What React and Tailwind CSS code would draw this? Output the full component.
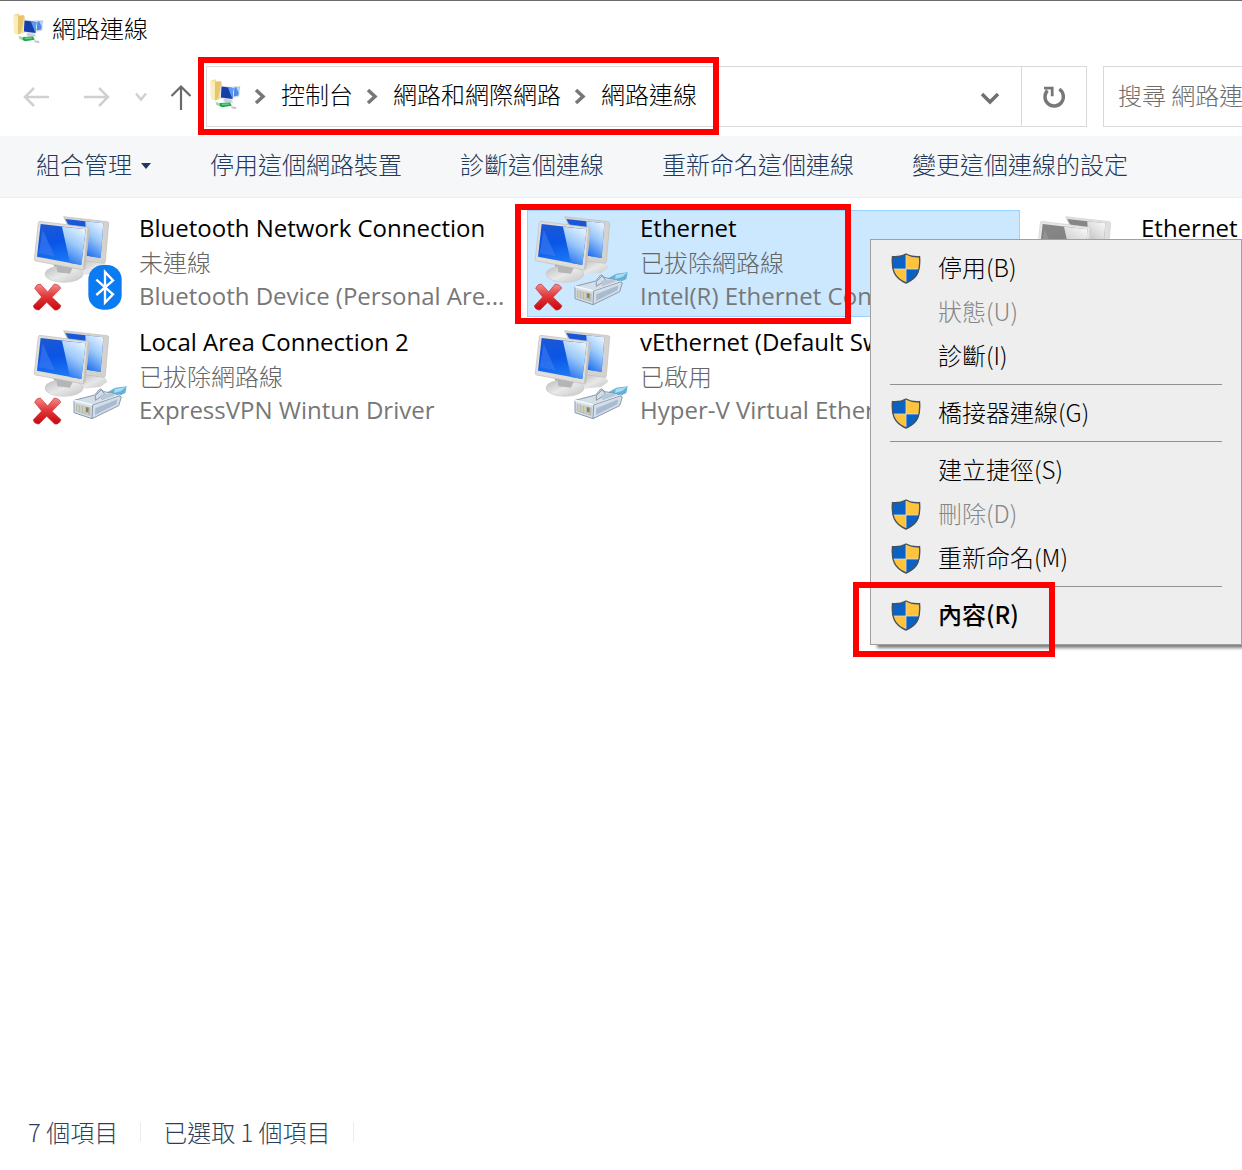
import { useState } from 'react';

const COMMANDS = ['停用這個網路裝置', '診斷這個連線', '重新命名這個連線', '變更這個連線的設定'];

const CRUMBS = ['控制台', '網路和網際網路', '網路連線'];

const CONNECTIONS = [
  { id: 1, name: 'Bluetooth Network Connection', status: '未連線', device: 'Bluetooth Device (Personal Are...', badge: 'bluetooth', off: true },
  { id: 2, name: 'Ethernet', status: '已拔除網路線', device: 'Intel(R) Ethernet Conn', badge: 'cable', off: true },
  { id: 3, name: 'Ethernet', status: '', device: '', disabled: true },
  { id: 4, name: 'Local Area Connection 2', status: '已拔除網路線', device: 'ExpressVPN Wintun Driver', badge: 'cable', off: true },
  { id: 5, name: 'vEthernet (Default Switch)', status: '已啟用', device: 'Hyper-V Virtual Ethernet', badge: 'cable' },
];

const MENU = [
  [
    { label: '停用(B)', shield: true },
    { label: '狀態(U)', disabled: true },
    { label: '診斷(I)' },
  ],
  [{ label: '橋接器連線(G)', shield: true }],
  [
    { label: '建立捷徑(S)' },
    { label: '刪除(D)', shield: true, disabled: true },
    { label: '重新命名(M)', shield: true },
  ],
  [{ label: '內容(R)', shield: true, bold: true, marked: true }],
];

function NetworkFolderIcon() {
  return (
    <svg viewBox="38 38 94 94" className="h-[31px] w-[31px] shrink-0" aria-hidden="true">
      <path d="M40 43l14-4 4 5 14 1 3 8-4 44-17 6-13-4z" fill="#f3dc94" />
      <path d="M40 43l13 5v55l-12-5z" fill="#fbeebd" />
      <path d="M53 48l18-3v16l-10 38-8 4z" fill="#e6c56d" />
      <path d="M102 61l28-2-3 33-24 4z" fill="#d5deec" />
      <path d="M105 64l22-2-3 26-19 4z" fill="#4f8be6" />
      <path d="M117 63l10-1-2 18z" fill="#b4d4fa" />
      <path d="M70 58l42 4-3 40-41-5z" fill="#e3e9f2" />
      <path d="M73 61l36 4-3 34-35-5z" fill="#173fa9" />
      <path d="M92 63l17 2-3 34z" fill="#5e9bf0" />
      <path d="M82 98l20 3 7 8-22 1-9-5z" fill="#ccd1d8" />
      <path d="M55 108l20 5-1 9-17-5z" fill="#9adbb1" />
      <path d="M68 111l31-2 5 10-29 5-8-4z" fill="#25a653" />
      <path d="M73 113l22-1 2 3-21 2z" fill="#79d99a" />
      <path d="M101 121l16 2 1 7-14-3z" fill="#bfc4c8" />
    </svg>
  );
}

function Shield() {
  return (
    <svg viewBox="0 0 30 31" className="h-[31px] w-[30px]" aria-hidden="true">
      <path d="M15 1c4 2.300 8.500 3 13.500 2.600C29.600 16 27.500 25 15 30 2.500 25 .4 16 1.500 3.600 6.500 4 11 3.300 15 1z" fill="#ffc33c" />
      <path d="M15 1v15H1.800C1.200 12 1.200 8 1.500 3.600 6.500 4 11 3.300 15 1z" fill="#0a62c4" />
      <path d="M15 16h13.200C27 23 23.500 27 15 30z" fill="#0a62c4" />
      <path d="M15 1v29M2 16h26" stroke="#d9dcd8" strokeWidth="0.8" />
      <path d="M15 1c4 2.300 8.500 3 13.500 2.600C29.600 16 27.500 25 15 30 2.500 25 .4 16 1.500 3.600 6.500 4 11 3.300 15 1z" fill="none" stroke="#45525e" strokeWidth="1.400" />
    </svg>
  );
}

function ConnectionIcon({ badge, off, disabled }) {
  return (
    <svg viewBox="30 30 300 306" className={`h-[102px] w-[100px] ${disabled ? 'opacity-70 grayscale' : ''}`} aria-hidden="true">
      <defs>
        <linearGradient id="screen" x1="0" y1="0" x2="0.200" y2="1">
          <stop offset="0" stopColor="#1f57d2" />
          <stop offset="0.500" stopColor="#0a55e6" />
          <stop offset="1" stopColor="#1c78f5" />
        </linearGradient>
        <linearGradient id="shine" x1="0.700" y1="0" x2="0.300" y2="1">
          <stop offset="0" stopColor="#e4f2ff" />
          <stop offset="0.450" stopColor="#9cc9fa" />
          <stop offset="1" stopColor="#2170ee" />
        </linearGradient>
        <linearGradient id="stand" x1="0" y1="0" x2="1" y2="1">
          <stop offset="0" stopColor="#b9bbbd" />
          <stop offset="0.500" stopColor="#e8e8e8" />
          <stop offset="1" stopColor="#c3c4c5" />
        </linearGradient>
        <linearGradient id="cross" x1="0" y1="0" x2="0" y2="1">
          <stop offset="0" stopColor="#f58a8a" />
          <stop offset="0.450" stopColor="#e23a3c" />
          <stop offset="1" stopColor="#c8060c" />
        </linearGradient>
      </defs>

      {/* rear monitor */}
      <path d="M196 178l58 8 8 14-22 16-60 6z" fill="url(#stand)" />
      <path d="M131 47l131 15q5 1 4 6l-10 114q-1 5-6 5l-62-9z" fill="#d3d2ce" stroke="#bdbcb9" strokeWidth="2" />
      <path d="M136 54l114 13-8 104-50-8z" fill="url(#screen)" />
      <path d="M196 61l54 6-8 104-42-7z" fill="url(#shine)" />

      {/* front monitor */}
      <path d="M100 190l60 12-2 22-44-4z" fill="#a9aaac" />
      <ellipse cx="132" cy="219" rx="57" ry="25" fill="url(#stand)" stroke="#c9c9c9" strokeWidth="2" />
      <path d="M108 186l52 10-10 22-38-4z" fill="#b4b5b7" />
      <path d="M60 61l142 18q6 1 5 7l-13 114q-1 7-8 6L47 180q-5-1-4-7L55 65q1-4 5-4z" fill="#dfded9" stroke="#bfbeba" strokeWidth="2" />
      <path d="M203 81l6 4-13 117-7 4z" fill="#c2c1be" />
      <path d="M62 69l135 16-13 107-133-25z" fill="url(#screen)" />
      <path d="M126 77l71 8-13 107-34-6z" fill="url(#shine)" />
      <path d="M68 86l36 80-48-9z" fill="#3e7cf0" opacity="0.600" />

      {badge === 'bluetooth' && (
        <g>
          <rect x="205" y="192" width="100" height="134" rx="44" fill="#0a7bf2" />
          <path d="M229 236l50 44-24 25v-92l24 25-50 44" fill="none" stroke="#fff" strokeWidth="7" strokeLinejoin="miter" />
        </g>
      )}

      {badge === 'cable' && (
        <g strokeLinejoin="round">
          <path d="M262 232l24-14 34-4-4 20-30 14-20 8z" fill="#62b1d6" />
          <path d="M284 222l34-7-14 13-22 6z" fill="#a9dcef" />
          <path d="M162 256l62-16 16-19 12 9 34 6 18 10-8 26-80 39-54-18z" fill="#d3dee9" stroke="#8b99aa" strokeWidth="3" />
          <path d="M162 256l56 14 82-29" fill="none" stroke="#f4f8fb" strokeWidth="5" />
          <path d="M218 270l-2 41M218 270l82-28M226 242l18-18 10 14-28 18z" fill="none" stroke="#8b99aa" strokeWidth="3" />
          <path d="M226 280l66-27-3 15-64 32z" fill="#a9bbd0" />
          <path d="M240 240l34-6 12 7-42 15z" fill="#b7c7d9" />
          <path d="M168 266l44 12-1 25-44-14z" fill="#b4bdbd" />
          <path d="M174 268v21M183 270v22M192 273v22M201 275v23" stroke="#e6dfab" strokeWidth="3" />
          <path d="M198 276l8 2-1 15-7-3z" fill="#8e8250" />
        </g>
      )}

      {off && (
        <path d="M44 262q6-14 17-13l22 24 20-24q16 2 19 13l-26 27 27 25q-6 15-19 13l-24-23-23 23q-15 0-17-13l25-26z" fill="url(#cross)" stroke="#c53036" strokeWidth="2" strokeLinejoin="round" />
      )}
    </svg>
  );
}

function CrumbArrow() {
  return (
    <svg viewBox="0 0 40 20" className="mt-1 h-5 w-10 shrink-0" fill="none" stroke="#777" strokeWidth="3.500" aria-hidden="true">
      <path d="M15 4l7 6.500-7 6.500" />
    </svg>
  );
}

function ContextMenu() {
  return (
    <div role="menu" className="absolute top-[29px] left-[343px] z-10 w-[372px] border border-[#a0a0a0] bg-[#eeeeee] pt-[6px] pb-[7px] shadow-[5px_5px_3px_-2px_rgba(0,0,0,0.5)]">
      {MENU.map((group, i) => (
        <div key={i} role="group">
          {i > 0 && <hr className="mx-[19px] my-[6px] border-[#919191]" />}
          {group.map((item) => (
            <div key={item.label} className="relative">
              <button
                type="button"
                role="menuitem"
                disabled={item.disabled}
                className={`flex h-11 w-full items-center gap-[17px] pl-5 text-left ${
                  item.disabled ? 'text-[#868686]' : 'text-black hover:bg-white'
                } ${item.bold ? 'font-medium' : ''}`}
              >
                <span className="w-[30px] shrink-0">{item.shield && <Shield />}</span>
                <span className="pb-[2px]">{item.label}</span>
              </button>
              {item.marked && (
                <div className="pointer-events-none absolute -top-[11px] -left-[18px] h-[75px] w-[202px] border-6 border-[#ff0000]" />
              )}
            </div>
          ))}
        </div>
      ))}
    </div>
  );
}

function ConnectionTile({ item, selected, onSelect }) {
  return (
    <div className="relative h-[107px]">
      <button
        type="button"
        onClick={onSelect}
        className={`flex h-full w-full items-start gap-[9px] border pl-[3px] text-left ${
          selected ? 'border-[#99d1ff] bg-[#cce8ff]' : 'border-transparent'
        }`}
      >
        <span className="w-[100px] shrink-0">
          <ConnectionIcon badge={item.badge} off={item.off} disabled={item.disabled} />
        </span>
        <span className="block w-[372px] font-['Open_Sans','Noto_Sans_CJK_TC',sans-serif] text-2xl leading-[34px] font-normal text-[#777777]">
          <span className="block truncate text-black">{item.name}</span>
          <span className="block h-[34px] truncate font-['Noto_Sans_CJK_TC',sans-serif] text-2xl leading-[34px] font-light text-[#666666]">{item.status}</span>
          <span className="block truncate">{item.device}</span>
        </span>
      </button>
      {selected && (
        <>
          <div className="pointer-events-none absolute -top-[6px] -left-3 h-[120px] w-[336px] border-6 border-[#ff0000]" />
          <ContextMenu />
        </>
      )}
    </div>
  );
}

export default function App() {
  const [selectedId, setSelectedId] = useState(2);

  return (
    <div className="flex min-h-screen flex-col overflow-hidden border-t border-[#6b6b6b] bg-white font-['Noto_Sans_CJK_TC',sans-serif] text-2xl leading-8 font-light whitespace-nowrap text-black">
      {/* Title bar */}
      <header className="flex h-14 items-center gap-2 pb-[2px] pl-[13px]">
        <NetworkFolderIcon />
        <h1>網路連線</h1>
      </header>

      {/* Navigation */}
      <div className="flex h-[79px] items-center pl-[22px]">
        <div className="flex w-[184px] shrink-0 items-center">
          <button type="button" aria-label="上一頁" disabled className="mr-8">
            <svg viewBox="0 0 28 28" className="h-7 w-7" fill="none" stroke="#d0d0d0" strokeWidth="2.500">
              <path d="M27 14H3M12 5l-9 9 9 9" />
            </svg>
          </button>
          <button type="button" aria-label="下一頁" disabled className="mr-5">
            <svg viewBox="0 0 28 28" className="h-7 w-7" fill="none" stroke="#d0d0d0" strokeWidth="2.500">
              <path d="M2 14h24M17 5l9 9-9 9" />
            </svg>
          </button>
          <button type="button" aria-label="最近的位置" className="mr-4">
            <svg viewBox="0 0 20 28" className="h-7 w-5" fill="none" stroke="#d0d0d0" strokeWidth="2.500">
              <path d="M6 10.500l5 6 5-6" />
            </svg>
          </button>
          <button type="button" aria-label="上移">
            <svg viewBox="0 0 28 28" className="h-7 w-7" fill="none" stroke="#6a6a6a" strokeWidth="2.200">
              <path d="M15 27V4M5.500 13L15 3.500 24.500 13" />
            </svg>
          </button>
        </div>

        <div className="relative flex h-[61px] flex-1 items-center border border-[#d9d9d9]">
          <nav className="flex flex-1 items-center pb-[5px] pl-[3px]">
            <NetworkFolderIcon />
            {CRUMBS.map((crumb) => (
              <div key={crumb} className="flex items-center">
                <CrumbArrow />
                <a href="#">{crumb}</a>
              </div>
            ))}
          </nav>
          <button type="button" aria-label="先前的位置" className="mr-5">
            <svg viewBox="0 0 22 22" className="h-[22px] w-[22px]" fill="none" stroke="#707070" strokeWidth="3.500">
              <path d="M3 8l8 8 8-8" />
            </svg>
          </button>
          <button type="button" aria-label="重新整理" className="flex h-full w-[65px] items-center justify-center border-l border-[#d9d9d9]">
            <svg viewBox="0 0 24 24" className="h-6 w-6" fill="none" stroke="#777" strokeWidth="3.400">
              <path d="M17.300 4.200A9.200 9.200 0 1 1 5.500 5.500" />
              <path d="M2 3.200h8.200v8" strokeWidth="2.800" />
            </svg>
          </button>
          <div className="pointer-events-none absolute -top-[10px] -left-[9px] h-[78px] w-[521px] border-6 border-[#ff0000]" />
        </div>

        <input
          type="text"
          aria-label="搜尋 網路連線"
          placeholder="搜尋 網路連線"
          className="ml-4 h-[61px] w-[139px] shrink-0 border border-r-0 border-[#d9d9d9] pb-[5px] pl-[14px] font-light placeholder:text-[#6d6d6d] focus:outline-none"
        />
      </div>

      {/* Command bar */}
      <div className="flex h-[62px] items-center gap-[58px] border-b border-[#ebedef] bg-[#f5f7f9] pb-[6px] pl-9 text-[#1e395b]">
        <button type="button" className="flex items-center gap-2">
          組合管理
          <svg viewBox="0 0 12 6" className="mt-1 h-[6px] w-3" aria-hidden="true">
            <path d="M1 0h10L6 6z" fill="#1e395b" />
          </svg>
        </button>
        {COMMANDS.map((label) => (
          <button key={label} type="button">{label}</button>
        ))}
      </div>

      {/* Connections */}
      <main className="flex-1 pt-3 pl-[26px]">
        <div className="grid grid-cols-[repeat(3,493px)] gap-x-2 gap-y-[7px]">
          {CONNECTIONS.map((item) => (
            <ConnectionTile
              key={item.id}
              item={item}
              selected={item.id === selectedId}
              onSelect={() => setSelectedId(item.id)}
            />
          ))}
        </div>
      </main>

      {/* Status bar */}
      <footer className="flex h-[74px] items-center gap-[22px] pb-[2px] pl-7 text-[#2b3f5c]">
        <span>7 個項目</span>
        <span className="h-5 w-px bg-[#e9edf2]" />
        <span>已選取 1 個項目</span>
        <span className="h-5 w-px bg-[#e9edf2]" />
      </footer>
    </div>
  );
}
